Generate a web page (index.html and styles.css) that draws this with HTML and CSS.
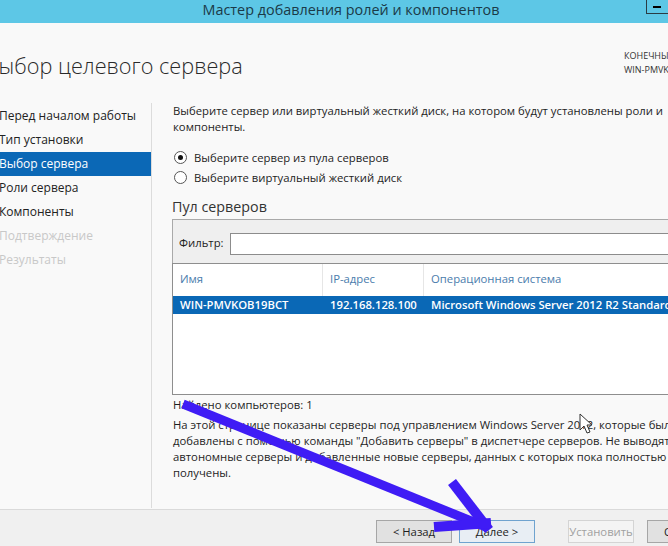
FILE: index.html
```html
<!DOCTYPE html>
<html lang="ru">
<head>
<meta charset="utf-8">
<title>Мастер добавления ролей и компонентов</title>
<link rel="stylesheet" href="styles.css">
</head>
<body>
<div class="window">
  <div class="titlebar">
    <span class="title">Мастер добавления ролей и компонентов</span>
    <div class="min-btn"><span class="min-bar"></span></div>
  </div>
  <div class="header">
    <h1 class="heading">Выбор целевого сервера</h1>
    <div class="dest">КОНЕЧНЫЙ СЕРВЕР<br>WIN-PMVKOB19BCT</div>
  </div>
  <div class="main">
    <nav class="nav">
      <div class="nav-item">Перед началом работы</div>
      <div class="nav-item">Тип установки</div>
      <div class="nav-item active">Выбор сервера</div>
      <div class="nav-item">Роли сервера</div>
      <div class="nav-item">Компоненты</div>
      <div class="nav-item disabled">Подтверждение</div>
      <div class="nav-item disabled">Результаты</div>
    </nav>
    <div class="content">
      <p class="desc">Выберите сервер или виртуальный жесткий диск, на котором будут установлены роли и<br>компоненты.</p>
      <div class="radios">
        <label class="radio"><span class="dot checked"></span>Выберите сервер из пула серверов</label>
        <label class="radio"><span class="dot"></span>Выберите виртуальный жесткий диск</label>
      </div>
      <div class="pool-title">Пул серверов</div>
      <div class="filter">
        <span class="filter-label">Фильтр:</span>
        <div class="filter-input"></div>
      </div>
      <div class="table">
        <div class="thead">
          <div class="th c1">Имя</div>
          <div class="th c2">IP-адрес</div>
          <div class="th c3">Операционная система</div>
        </div>
        <div class="row selected">
          <div class="td c1">WIN-PMVKOB19BCT</div>
          <div class="td c2">192.168.128.100</div>
          <div class="td c3">Microsoft Windows Server 2012 R2 Standard</div>
        </div>
      </div>
      <div class="found">Найдено компьютеров: 1</div>
      <p class="note">На этой странице показаны серверы под управлением Windows Server 2012, которые были<br>добавлены с помощью команды "Добавить серверы" в диспетчере серверов. Не выводятся<br>автономные серверы и добавленные новые серверы, данных с которых пока полностью не<br>получены.</p>
    </div>
  </div>
  <div class="footer">
    <button class="btn">&lt; Назад</button>
    <button class="btn primary">Далее &gt;</button>
    <button class="btn disabled gap">Установить</button>
    <button class="btn">Отмена</button>
  </div>
</div>
<svg class="overlay" viewBox="0 0 668 546" width="668" height="546">
  <g stroke="#3f1cf5" fill="none" stroke-linecap="butt">
    <line x1="183" y1="404" x2="486" y2="527" stroke-width="9"/>
    <line x1="452" y1="482" x2="489" y2="530" stroke-width="10"/>
    <line x1="434" y1="527" x2="491" y2="523" stroke-width="10"/>
  </g>
  <path d="M580 414 L580 430 L584 426 L587 433 L590 432 L587 425 L592 425 Z" fill="#fff" stroke="#333" stroke-width="1"/>
</svg>
</body>
</html>
```
FILE: styles.css
```css
html, body {
  margin: 0;
  padding: 0;
}
body {
  width: 668px;
  height: 546px;
  overflow: hidden;
  position: relative;
  background: #f9f9f9;
  font-family: "Open Sans", "Noto Sans", sans-serif;
  font-size: 11.3px;
  color: #1e1e1e;
}
.window {
  display: flex;
  flex-direction: column;
  height: 546px;
}
.titlebar {
  height: 23px;
  background: #5dc7e6;
  display: flex;
  align-items: center;
  justify-content: center;
  position: relative;
  flex: none;
}
.title {
  font-size: 14.4px;
  color: #1b3a48;
  margin-top: -4px;
  margin-left: 34px;
}
.min-btn {
  position: absolute;
  left: 646px;
  top: -1px;
  width: 30px;
  height: 15px;
  border: 1px solid #2a3c44;
  box-sizing: border-box;
}
.min-bar {
  position: absolute;
  left: 6px;
  top: 6px;
  width: 8px;
  height: 2px;
  background: #000;
}
.header {
  height: 77px;
  display: flex;
  flex: none;
}
.heading {
  margin: 28px 0 0 -15px;
  font-weight: 300;
  font-size: 21.7px;
  color: #2a2a2a;
  line-height: 30px;
  flex: 1;
}
.dest {
  width: 44px;
  flex: none;
  white-space: nowrap;
  font-size: 9px;
  line-height: 14px;
  color: #333;
  padding-top: 26px;
}
.main {
  flex: 1;
  display: flex;
  min-height: 0;
}
.nav {
  width: 152px;
  flex: none;
  padding-top: 1px;
  border-right: 1px solid #dcdcdc;
  margin: 3px 0 1px;
  box-sizing: border-box;
}
.nav-item {
  height: 24px;
  line-height: 24px;
  font-size: 12px;
  text-indent: -1px;
  color: #222;
  white-space: nowrap;
}
.nav-item.active {
  background: #0b68b6;
  color: #fff;
}
.nav-item.disabled {
  color: #c8c8c8;
}
.content {
  padding: 3px 0 0 21px;
  flex: none;
  width: 600px;
}
.desc, .note {
  margin: 0;
  line-height: 16px;
  white-space: nowrap;
}
.radios {
  margin-top: 12px;
}
.radio {
  display: flex;
  align-items: center;
  height: 20px;
  white-space: nowrap;
}
.dot {
  width: 11px;
  height: 11px;
  border: 1px solid #555;
  border-radius: 50%;
  background: #fff;
  margin: 0 7px 0 1px;
  position: relative;
  flex: none;
}
.dot.checked::after {
  content: "";
  position: absolute;
  left: 3px;
  top: 3px;
  width: 5px;
  height: 5px;
  border-radius: 50%;
  background: #111;
}
.pool-title {
  margin-top: 10px;
  font-size: 14.3px;
  line-height: 20px;
  color: #333;
  margin-left: -1px;
}
.filter {
  margin-top: 2px;
  height: 44px;
  box-sizing: border-box;
  border: 1px solid #a9a9a9;
  border-bottom: none;
  background: #efefef;
  display: flex;
  align-items: center;
  padding: 0 0 0 6px;
  margin-left: -1px;
}
.filter-label {
  margin-right: 6px;
  padding-top: 2px;
}
.filter-input {
  flex: 1;
  height: 22px;
  margin-top: 4px;
  background: #fff;
  border: 1px solid #8c8c8c;
  box-sizing: border-box;
}
.table {
  height: 132px;
  border: 1px solid #8e8e8e;
  background: #fff;
  box-sizing: border-box;
  margin-left: -1px;
}
.thead {
  display: flex;
  height: 32px;
}
.th {
  color: #4a7cac;
  padding: 7px 0 0 7px;
  line-height: 16px;
  box-sizing: border-box;
  border-right: 1px solid #e6e6e6;
}
.row {
  display: flex;
  height: 18px;
  line-height: 18px;
}
.row.selected {
  background: #0a68b6;
  color: #fff;
}
.td {
  padding-left: 7px;
  box-sizing: border-box;
  white-space: nowrap;
  font-weight: 600;
}
.c1 { width: 150px; }
.c2 { width: 101px; }
.c3 { flex: 1; border-right: none; }
.found {
  margin-top: 2px;
  line-height: 16px;
}
.note {
  margin-top: 4px;
}
.footer {
  height: 37px;
  flex: none;
  background: #f0f0f0;
  border-top: 1px solid #dadada;
  box-sizing: border-box;
  display: flex;
  align-items: flex-start;
  padding: 10px 0 0 376px;
  white-space: nowrap;
}
.btn {
  font-family: inherit;
  font-size: 11.3px;
  height: 23px;
  width: 76px;
  margin-right: 7px;
  background: #e1e1e1;
  border: 1px solid #a6a6a6;
  color: #1e1e1e;
  padding: 0;
  flex: none;
}
.btn.primary {
  background: #e8eef4;
  border-color: #6fa3cf;
}
.btn.disabled {
  background: #f4f4f4;
  border-color: #d4d4d4;
  color: #a0a0a0;
  width: 66px;
}
.btn.gap {
  margin-left: 26px;
  margin-right: 13px;
}
.overlay {
  position: absolute;
  left: 0;
  top: 0;
  pointer-events: none;
}
```
